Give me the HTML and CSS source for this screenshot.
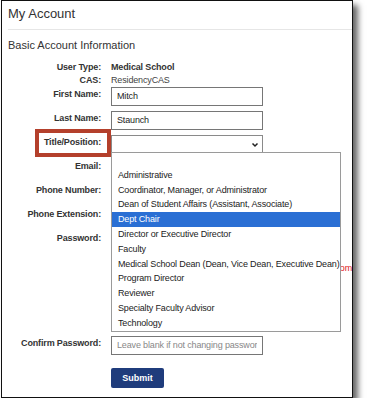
FILE: index.html
```html
<!DOCTYPE html>
<html lang="en">
<head>
    <meta charset="UTF-8">
    <meta name="viewport" content="width=device-width, initial-scale=1.0">
    <title>My Account</title>
    <link rel="stylesheet" href="styles.css">
</head>
<body>
    <div class="frame">
        <h1 class="page-title">My Account</h1>
        <div class="section">
            <h2>Basic Account Information</h2>
            <form class="account-form">
                <div class="row text-row">
                    <label>User Type:</label>
                    <span class="value strong">Medical School</span>
                </div>
                <div class="row text-row">
                    <label>CAS:</label>
                    <span class="value">ResidencyCAS</span>
                </div>
                <div class="row first">
                    <label>First Name:</label>
                    <input type="text" value="Mitch">
                </div>
                <div class="row">
                    <label>Last Name:</label>
                    <input type="text" value="Staunch">
                </div>
                <div class="row">
                    <label class="marked">Title/Position:</label>
                    <div class="select-wrap">
                        <select></select>
                        <svg class="chevron" width="8" height="6" viewBox="0 0 8 6">
                            <path d="M1.5 1.5 L4 4 L6.5 1.5" fill="none" stroke="#222" stroke-width="1.5"/>
                        </svg>
                    </div>
                </div>
                <div class="row">
                    <label>Email:</label>
                    <input type="text">
                </div>
                <div class="row">
                    <label>Phone Number:</label>
                    <input type="text">
                </div>
                <div class="row">
                    <label>Phone Extension:</label>
                    <input type="text">
                </div>
                <div class="row">
                    <label>Password:</label>
                    <input type="password">
                </div>
                <div class="hint">
                    <p>Must contain a character from</p>
                </div>
                <div class="row">
                    <label>Confirm Password:</label>
                    <input type="password" placeholder="Leave blank if not changing password">
                </div>
                <div class="actions">
                    <button type="button" class="submit">Submit</button>
                </div>
            </form>
        </div>

        <ul class="dropdown">
            <li>&nbsp;</li>
            <li>Administrative</li>
            <li>Coordinator, Manager, or Administrator</li>
            <li>Dean of Student Affairs (Assistant, Associate)</li>
            <li class="active">Dept Chair</li>
            <li>Director or Executive Director</li>
            <li>Faculty</li>
            <li>Medical School Dean (Dean, Vice Dean, Executive Dean)</li>
            <li>Program Director</li>
            <li>Reviewer</li>
            <li>Specialty Faculty Advisor</li>
            <li>Technology</li>
        </ul>
    </div>
</body>
</html>
```

FILE: styles.css
```css
* {
    margin: 0;
    padding: 0;
    box-sizing: border-box;
}

body {
    background-color: white;
    font-family: "Liberation Sans", Arial, sans-serif;
    color: #333;
}

.frame {
    position: relative;
    width: 352px;
    height: 398px;
    margin-left: 1px;
    border: 1px solid #111;
    background-color: white;
    overflow: hidden;
    box-shadow: 5px 5px 6px rgba(0, 0, 0, 0.6);
}

.page-title {
    font-size: 13px;
    line-height: 16px;
    font-weight: normal;
    color: #333;
    margin-left: 6px;
    padding: 5px 0 7px 0;
    border-bottom: 1px solid #e6e6e6;
}

.section {
    padding: 8px 0 0 6px;
}

.section h2 {
    font-size: 11px;
    line-height: 14px;
    font-weight: normal;
    color: #333;
    margin-bottom: 8px;
}

.account-form {
    display: flex;
    flex-direction: column;
    margin-left: -6px;
    font-size: 9px;
    letter-spacing: -0.15px;
}

.row {
    display: flex;
    align-items: center;
    gap: 10px;
    height: 24px;
}

.text-row {
    height: 13px;
}

.row.first {
    margin-top: -2px;
}

.row label {
    position: relative;
    width: 99px;
    line-height: 12px;
    text-align: right;
    font-weight: bold;
    color: #333;
    white-space: nowrap;
    margin-top: -4px;
}

.text-row label {
    margin-top: 0;
}

.value {
    color: #444;
}

.value.strong {
    font-weight: bold;
    color: #333;
}

.row input,
.select-wrap {
    width: 152px;
    height: 19px;
    border: 1px solid #767676;
    font-family: inherit;
    font-size: 9px;
    letter-spacing: -0.15px;
    color: #222;
    padding: 0 5px;
    background-color: white;
}

.row input::placeholder {
    color: #888;
}

.select-wrap {
    position: relative;
    padding: 0;
    border-color: #8a8a8a;
}

.select-wrap select {
    appearance: none;
    width: 100%;
    height: 100%;
    border: none;
    background: transparent;
}

.chevron {
    position: absolute;
    right: 3px;
    top: 6px;
}

.marked::after {
    content: "";
    position: absolute;
    left: 33px;
    right: -10px;
    top: -7px;
    bottom: -9px;
    border: 4px solid #b4402c;
}

.hint {
    height: 81px;
    padding-left: 111px;
    padding-top: 11px;
    color: #e02020;
    text-align: right;
    white-space: nowrap;
}

.actions {
    padding-left: 109px;
    padding-top: 11px;
}

.submit {
    width: 53px;
    height: 20px;
    border: none;
    border-radius: 2px;
    background-color: #1f3c7c;
    color: white;
    font-family: inherit;
    font-size: 9px;
    font-weight: bold;
}

.dropdown {
    position: absolute;
    left: 109px;
    top: 151px;
    width: 230px;
    height: 180px;
    list-style: none;
    background-color: white;
    border: 1px solid #9a9a9a;
    font-size: 9px;
    letter-spacing: -0.15px;
    color: #222;
}

.dropdown li {
    height: 14.8px;
    line-height: 14.8px;
    padding-left: 6px;
    white-space: nowrap;
}

.dropdown li.active {
    background-color: #2a6fd4;
    color: white;
}
```
